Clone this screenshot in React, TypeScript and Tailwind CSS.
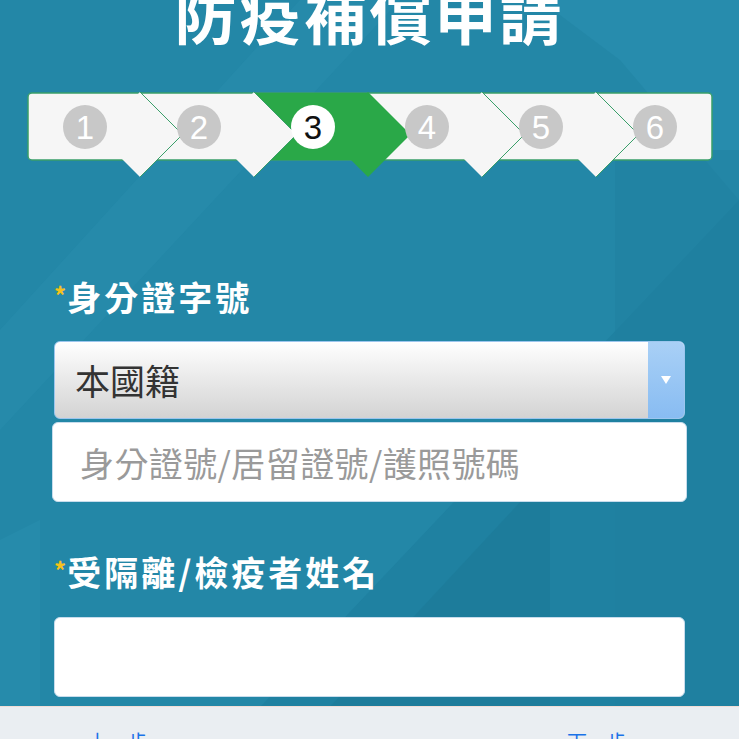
import React from "react";

const CJK = '"Noto Sans CJK TC", "Noto Sans", sans-serif';

function Stepper() {
  const oy = 88;
  const segW = 114;
  const x0 = 28;
  const diamonds = [0, 1, 2, 3, 4].map((i) => x0 + segW * (i + 1) - 2);
  const cy = 134.5 - oy;
  const h = 42.5;
  const dia = (cx: number) =>
    `${cx - h},${cy} ${cx},${cy - h} ${cx + h},${cy} ${cx},${cy + h}`;
  const green = "#2aa848";
  const line = "#3a9f6a";
  return (
    <svg width="739" height="95" viewBox="0 0 739 95" className="block">
      <rect x={x0} y={5} width={684} height={67} rx={4} fill="#f6f6f6" stroke={line} strokeWidth={1.5} />
      <rect x={diamonds[1]} y={5} width={segW} height={67} fill={green} />
      <polygon points={dia(diamonds[2])} fill={green} />
      {[4, 3, 1, 0].map((i) => (
        <g key={i}>
          <polygon points={dia(diamonds[i])} fill="#f6f6f6" />
          <polyline
            points={`${diamonds[i]},${cy - h} ${diamonds[i] + h},${cy} ${diamonds[i]},${cy + h}`}
            fill="none"
            stroke={line}
            strokeWidth={1}
          />
        </g>
      ))}
      {[0, 1, 2, 3, 4, 5].map((i) => {
        const cx = x0 + segW * i + 57;
        const active = i === 2;
        return (
          <g key={i}>
            <circle cx={cx} cy={39} r={22} fill={active ? "#ffffff" : "#c8c8c8"} />
            <text
              x={cx}
              y={51}
              textAnchor="middle"
              fontSize="33"
              fontFamily='"Liberation Sans", Arial, sans-serif'
              fill={active ? "#111111" : "#ffffff"}
            >
              {i + 1}
            </text>
          </g>
        );
      })}
    </svg>
  );
}

function Background() {
  return (
    <svg className="absolute inset-0" width="739" height="739" viewBox="0 0 739 739">
      <rect width="739" height="739" fill="#2387a7" />
      <polygon points="0,430 0,330 300,0 400,0" fill="#2a8fb0" opacity="0.45" />
      <polygon points="230,739 739,200 739,739" fill="#1f81a1" />
      <polygon points="540,0 739,0 739,200 620,60" fill="#2990b0" opacity="0.6" />
      <polygon points="615,150 739,150 739,739 615,739" fill="#1f7f9f" opacity="0.5" />
      <polygon points="0,540 40,520 40,739 0,739" fill="#2a8fb0" opacity="0.5" />
      <polygon points="300,739 550,470 550,739" fill="#1b7796" opacity="0.5" />
    </svg>
  );
}

export default function App() {
  return (
    <div className="relative w-full h-[739px] overflow-hidden" style={{ fontFamily: CJK }}>
      <Background />
      <div className="relative flex flex-col">
        <div className="h-[88px] overflow-hidden flex justify-center">
          <h1
            className="text-white font-bold text-[62px] leading-none tracking-[3px] mt-[-18px] whitespace-nowrap"
            style={{ fontFamily: CJK }}
          >
            防疫補償申請
          </h1>
        </div>
        <Stepper />
        <div className="px-[54px] flex flex-col">
          <div className="mt-[94px] h-[40px] flex items-start text-white font-bold text-[34px] leading-[40px] tracking-[3px]">
            <span className="text-[#f5c21b] text-[24px] leading-[24px] mt-[6px] mr-[1px] tracking-normal">*</span>
            <span>身分證字號</span>
          </div>
          <div className="mt-[24px] h-[78px] rounded-[6px] border border-[#9cc6ee] flex overflow-hidden bg-gradient-to-b from-[#ffffff] to-[#d3d3d3]">
            <div className="flex-1 flex items-center pl-[20px] text-[35px] text-[#333333]">本國籍</div>
            <div className="w-[36px] flex items-center justify-center bg-gradient-to-b from-[#a9d0f6] to-[#88bcf2]">
              <svg width="12" height="10" viewBox="0 0 12 10">
                <polygon points="1,1 11,1 6,9" fill="#ffffff" />
              </svg>
            </div>
          </div>
          <div className="mt-[3px] mx-[-2px] h-[80px] rounded-[6px] bg-white border border-[#c7dcec] flex items-center pl-[27px] text-[34px] tracking-[0.4px] text-[#9a9a9a]">
            身分證號/居留證號/護照號碼
          </div>
          <div className="mt-[50px] h-[40px] flex items-start text-white font-bold text-[34px] leading-[40px] tracking-[3px]">
            <span className="text-[#f5c21b] text-[24px] leading-[24px] mt-[6px] mr-[1px] tracking-normal">*</span>
            <span>受隔離/檢疫者姓名</span>
          </div>
          <div className="mt-[25px] h-[80px] rounded-[6px] bg-white border border-[#c7dcec]"></div>
        </div>
        <div className="mt-[9px] h-[60px] bg-[#eaeef2] border-t border-[#f1ddd6] flex items-start px-[52px] pt-[23px] text-[20px] leading-[24px]">
          <span className="text-[#888888]">‹</span>
          <span className="ml-[30px] text-[#1a73e8]">上一步</span>
          <span className="ml-auto mr-[60px] text-[#1a73e8]">下一步</span>
        </div>
      </div>
    </div>
  );
}
